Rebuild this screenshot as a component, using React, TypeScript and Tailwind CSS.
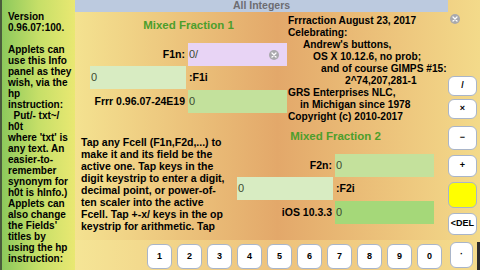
import React from "react";

const font = { fontFamily: '"Liberation Sans", Arial, sans-serif' };

const infoLines = [
  "Version",
  "0.96.07:100.",
  "",
  "Applets can",
  "use this Info",
  "panel as they",
  "wish, via the",
  "hp",
  "instruction:",
  "\u00a0 Put/- txt~/",
  "h0t",
  "where 'txt' is",
  "any text. An",
  "easier-to-",
  "remember",
  "synonym for",
  "h0t is hInfo.)",
  "Applets can",
  "also change",
  "the Fields'",
  "titles by",
  "using the hp",
  "instruction:",
];

const credits: [string, string][] = [
  ["Frrraction August 23, 2017", "pl-0"],
  ["Celebrating:", "pl-0"],
  ["Andrew's buttons,", "pl-[15px]"],
  ["OS X 10.12.6, no prob;", "pl-[25px]"],
  ["and of course GIMPS #15:", "pl-[33px]"],
  ["2^74,207,281-1", "pl-[57px]"],
  ["GRS Enterprises NLC,", "pl-0"],
  ["in Michigan since 1978", "pl-[12px]"],
  ["Copyright (c) 2010-2017", "pl-0"],
];

const helpLines = [
  "Tap any Fcell (F1n,F2d,...) to",
  "make it and its field be the",
  "active one. Tap keys in the",
  "digit keystrip to enter a digit,",
  "decimal point, or power-of-",
  "ten scaler into the active",
  "Fcell. Tap +-x/ keys in the op",
  "keystrip for arithmetic. Tap",
];

function ClearIcon() {
  return (
    <div className="w-[10px] h-[10px] rounded-full bg-[#a9a9ad] flex items-center justify-center">
      <svg width="6" height="6" viewBox="0 0 6 6">
        <path d="M1 1L5 5M5 1L1 5" stroke="white" strokeWidth="1.3" strokeLinecap="round" />
      </svg>
    </div>
  );
}

function Key({ label, className = "" }: { label: string; className?: string }) {
  return (
    <div
      className={`flex items-center justify-center rounded-[6px] border-[1.5px] border-[#a9b5c9] bg-white text-[9px] font-bold text-black ${className}`}
    >
      {label}
    </div>
  );
}

function FractionBlock({
  title,
  top,
  mid,
  bottom,
  topBg,
  bottomBg,
  topText,
  clear,
  className = "",
}: {
  title: string;
  top: string;
  mid: string;
  bottom: string;
  topBg: string;
  bottomBg: string;
  topText: string;
  clear?: boolean;
  className?: string;
}) {
  return (
    <div className={`flex flex-col w-[197px] shrink-0 ${className}`}>
      <div className="h-[14px] flex items-center justify-center text-[11.5px] font-bold text-[#4d9e2c]">
        {title}
      </div>
      <div className="grid grid-cols-[98px_99px] mt-[10px]">
        <div className="h-[23px] flex items-center justify-end pr-[3px] text-[10.5px] font-bold">{top}</div>
        <div className={`h-[23px] flex items-center pl-[1px] text-[11px] text-[#3d4a30] ${topBg}`}>
          <span className="flex-1">{topText}</span>
          {clear && (
            <span className="pr-[8px]">
              <ClearIcon />
            </span>
          )}
        </div>
        <div className="h-[23px] flex items-center pl-[1px] text-[11px] text-[#3d4a30] bg-[#d8ecc2] mr-[2px]">0</div>
        <div className="h-[23px] flex items-center pl-[1px] text-[10.5px] font-bold">{mid}</div>
        <div className="h-[23px] mt-[1px] flex items-center justify-end pr-[3px] text-[10.5px] font-bold whitespace-nowrap">
          {bottom}
        </div>
        <div className={`h-[23px] mt-[1px] flex items-center pl-[1px] text-[11px] text-[#3d4a30] ${bottomBg}`}>0</div>
      </div>
    </div>
  );
}

export default function App() {
  return (
    <div className="w-[480px] h-[270px] flex overflow-hidden text-black" style={font}>
      {/* Info panel */}
      <div className="w-[75px] h-full border-l-2 border-[#4b5d3c] bg-gradient-to-r from-[#8cc95c] via-[#c6df68] to-[#e9e872] pl-[6px] pt-[11px] overflow-hidden">
        {infoLines.map((l, i) => (
          <div key={i} className="h-[11px] leading-[11px] text-[10px] font-bold whitespace-nowrap">
            {l}
          </div>
        ))}
      </div>

      {/* Main */}
      <div className="flex-1 flex flex-col bg-gradient-to-r from-[#f4e290] via-[#e3a86a] to-[#f3da8a]">
        <div className="flex h-[240px]">
          <div className="w-[373px] flex flex-col">
            <div className="h-[12px] bg-[#bccadf] flex items-center justify-center text-[10.5px] font-bold text-[#6d6d72]">
              All Integers
            </div>

            {/* Upper: fraction 1 + credits */}
            <div className="flex h-[113px]">
              <FractionBlock
                className="ml-[15px] pt-[7px]"
                title="Mixed Fraction 1"
                top="F1n:"
                mid=":F1i"
                bottom="Frrr 0.96.07-24E19"
                topBg="bg-[#e8d4f5]"
                bottomBg="bg-[#c3e19c]"
                topText="0/"
                clear
              />
              <div className="flex-1 pl-[1px] pt-[3px] text-[10.2px] font-bold leading-[12px] whitespace-nowrap">
                {credits.map(([t, c], i) => (
                  <div key={i} className={c}>
                    {t}
                  </div>
                ))}
              </div>
            </div>

            {/* Lower: help text + fraction 2 */}
            <div className="flex flex-1">
              <div className="w-[162px] pl-[6px] pt-[11px] text-[10.5px] font-bold leading-[12px] h-[115px] overflow-hidden whitespace-nowrap">
                {helpLines.map((l, i) => (
                  <div key={i}>{l}</div>
                ))}
              </div>
              <FractionBlock
                className="pt-[5px]"
                title="Mixed Fraction 2"
                top="F2n:"
                mid=":F2i"
                bottom="iOS 10.3.3"
                topBg="bg-[#c4e19c]"
                bottomBg="bg-[#a5d879]"
                topText="0"
              />
            </div>
          </div>

          {/* Op keystrip */}
          <div className="flex-1 flex flex-col items-start">
            <div className="mt-[14px] ml-[2px]">
              <ClearIcon />
            </div>
            <Key label="/" className="w-[29px] h-[20px] mt-[52px]" />
            <Key label="×" className="w-[29px] h-[20px] mt-[3px]" />
            <Key label="−" className="w-[29px] h-[24px] mt-[7px]" />
            <Key label="+" className="w-[29px] h-[22px] mt-[5px]" />
            <div className="w-[29px] h-[26px] mt-[5px] rounded-[6px] border-[1.5px] border-[#a9b5c9] bg-[#ffff00]" />
            <Key label="<DEL" className="w-[29px] h-[22px] mt-[5px]" />
          </div>
        </div>

        {/* Digit keystrip */}
        <div className="flex h-[30px] items-start pt-[4px] pl-[72px] bg-gradient-to-r from-[#f5e596] via-[#eec27c] to-[#f4dc8c]">
          <div className="flex gap-[5px]">
            {["1", "2", "3", "4", "5", "6", "7", "8", "9", "0"].map((d) => (
              <Key key={d} label={d} className="w-[25px] h-[25px]" />
            ))}
          </div>
          <Key label="·" className="w-[23px] h-[26px] ml-[8px] -mt-[2px]" />
          <div className="ml-[4px] w-[3px] h-[28px] -mt-[2px] bg-[#2a2a2a]" />
        </div>
      </div>
    </div>
  );
}
